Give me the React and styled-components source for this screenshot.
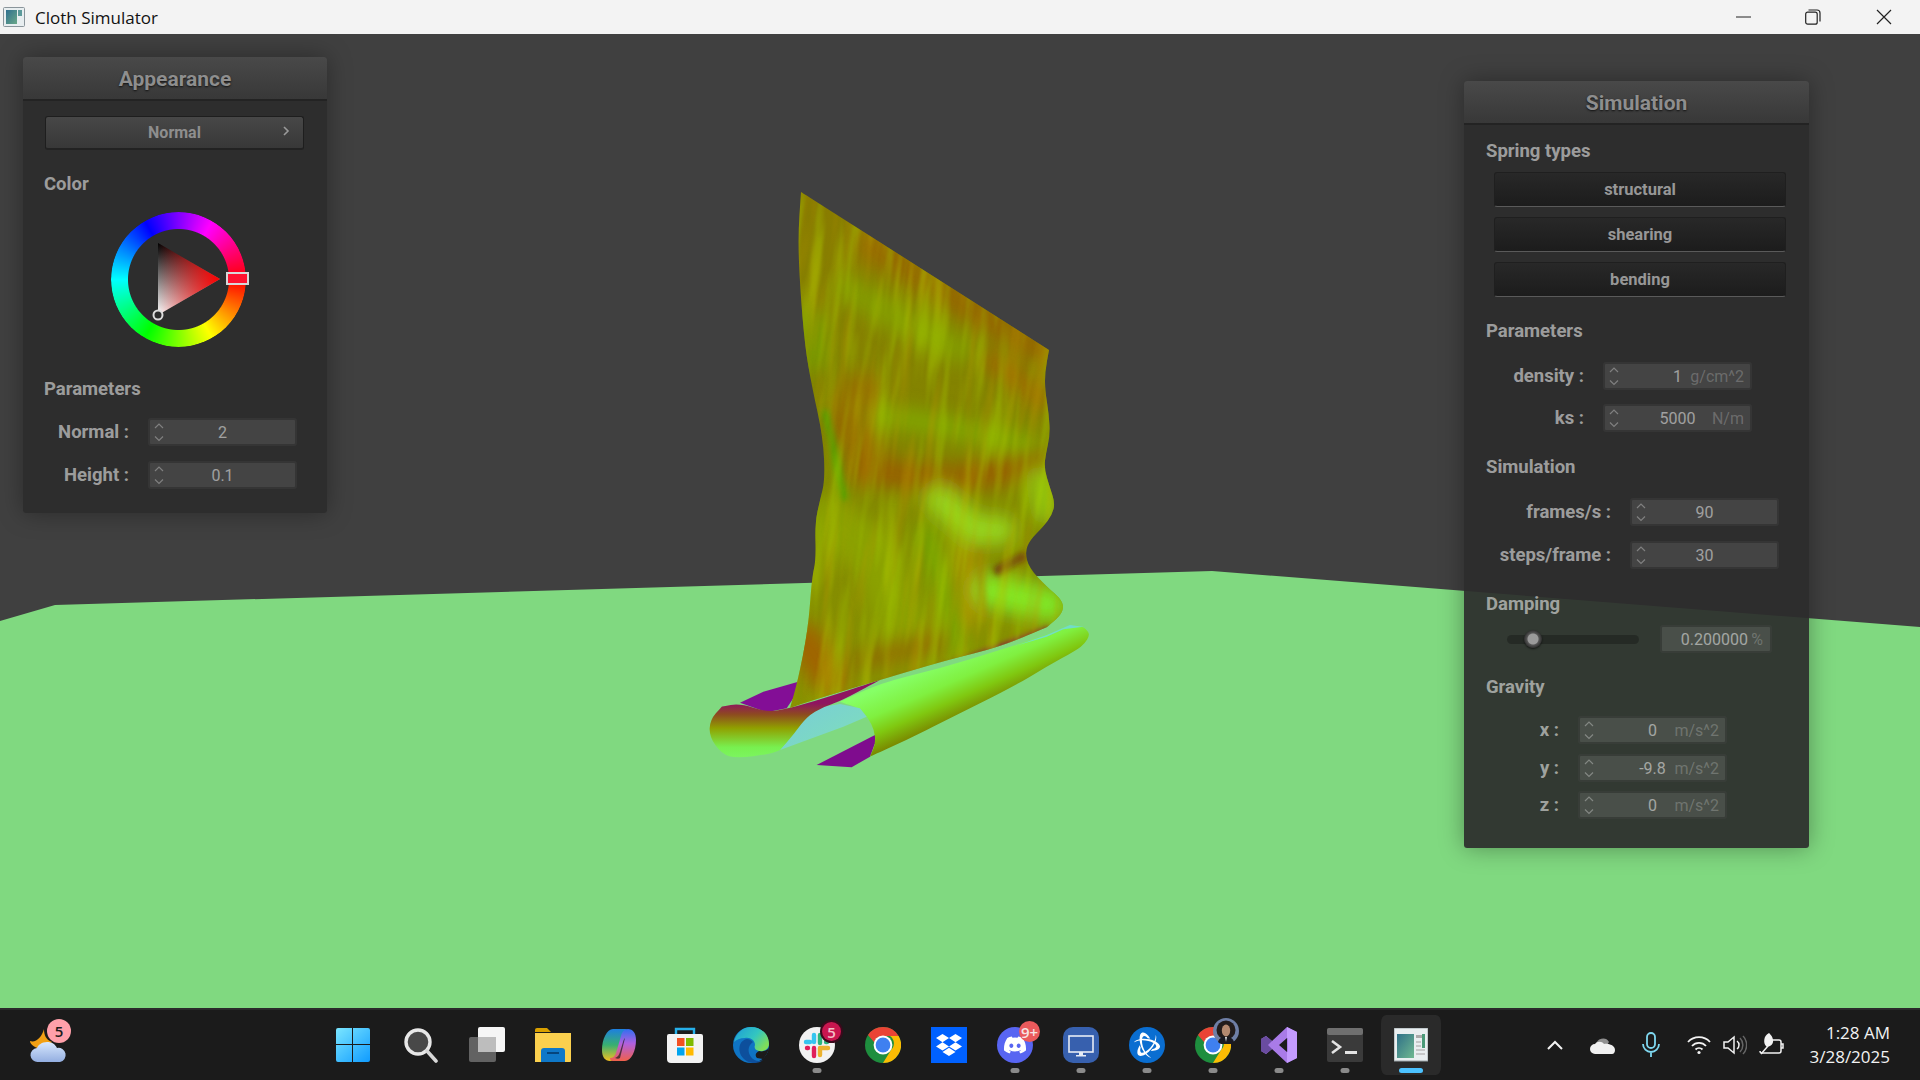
import React from "react";
import styled, { createGlobalStyle } from "styled-components";
import { SiBattledotnet } from "react-icons/si";
import { FaDiscord, FaDropbox } from "react-icons/fa";

const Global = createGlobalStyle`
  html, body { margin: 0; padding: 0; background: #404040; }
  * { box-sizing: border-box; }
`;

const Screen = styled.div`
  width: 1920px;
  height: 1080px;
  display: flex;
  flex-direction: column;
  overflow: hidden;
`;

const TitleBar = styled.div`
  height: 34px;
  background: #f3f3f3;
  display: flex;
  align-items: center;
  padding-left: 3px;
  font: 400 17px "Open Sans", sans-serif;
  color: #111;
`;
const AppName = styled.span`
  margin-left: 10px;
  flex: 1;
`;
const WinButton = styled.div`
  width: ${p => p.$w}px;
  height: 34px;
  display: flex;
  align-items: center;
  justify-content: center;
`;

const Viewport = styled.div`
  position: relative;
  height: 974px;
  background: #404040;
`;
const Scene = styled.svg`
  position: absolute;
  inset: 0;
  width: 1920px;
  height: 974px;
`;

const Panel = styled.div`
  position: absolute;
  left: ${p => p.$x}px;
  top: ${p => p.$y}px;
  width: ${p => p.$w}px;
  height: ${p => p.$h}px;
  background: rgba(43, 43, 43, 0.92);
  border-radius: 3px;
  box-shadow: 0 0 24px rgba(0, 0, 0, 0.35);
  font-family: Roboto, sans-serif;
`;
const PanelHead = styled.div`
  height: 44px;
  padding-top: 2px;
  background: linear-gradient(#494949, #383838);
  border-bottom: 2px solid #232323;
  border-radius: 3px 3px 0 0;
  display: flex;
  align-items: center;
  justify-content: center;
  font-size: 21px;
  font-weight: 700;
  color: #8e8e8e;
  text-shadow: 0 1px 2px #111;
`;
const Body = styled.div`
  padding-left: ${p => p.$pad}px;
`;
const SectionLabel = styled.div`
  height: 22px;
  line-height: 22px;
  margin-top: ${p => p.$mt}px;
  font-size: 18.5px;
  font-weight: 700;
  color: rgba(255, 255, 255, 0.55);
`;
const Dropdown = styled.div`
  position: relative;
  width: 259px;
  height: 34px;
  margin: 15px 0 0 22px;
  background: linear-gradient(#474747, #383838);
  border: 1px solid #1e1e1e;
  border-bottom: 2px solid #222;
  border-radius: 3px;
  display: flex;
  align-items: center;
  justify-content: center;
  font-size: 16px;
  font-weight: 700;
  color: #8e8e8e;
`;
const Caret = styled.svg`
  position: absolute;
  right: 12px;
  top: 8px;
`;
const WheelBox = styled.div`
  position: relative;
  width: 170px;
  height: 135px;
  margin: 17px 0 0 88px;
`;
const Ring = styled.div`
  position: absolute;
  left: 0;
  top: 0;
  width: 135px;
  height: 135px;
  border-radius: 50%;
  background: conic-gradient(from 90deg, #f00, #ff0, #0f0, #0ff, #00f, #f0f, #f00);
  -webkit-mask: radial-gradient(circle, transparent 50px, #000 51px);
  mask: radial-gradient(circle, transparent 50px, #000 51px);
`;
const Triangle = styled.svg`
  position: absolute;
  left: 0;
  top: 0;
  overflow: visible;
`;
const Row = styled.div`
  display: flex;
  align-items: center;
  gap: 19px;
  margin-top: ${p => p.$mt}px;
  height: 28px;
`;
const RowLabel = styled.div`
  width: ${p => p.$w}px;
  text-align: right;
  font-size: 18.5px;
  font-weight: 700;
  color: rgba(255, 255, 255, 0.55);
`;
const Field = styled.div`
  position: relative;
  width: ${p => p.$w || 149}px;
  height: 28px;
  background: rgba(255, 255, 255, 0.115);
  border: 2px solid rgba(0, 0, 0, 0.22);
  border-radius: 3px;
  display: flex;
  align-items: center;
  justify-content: center;
  font-size: 16px;
  color: rgba(255, 255, 255, 0.5);
`;
const Spin = styled.svg`
  position: absolute;
  left: 2px;
  top: 2px;
`;
const Unit = styled.span`
  position: absolute;
  right: 6px;
  color: rgba(255, 255, 255, 0.22);
`;
const ToggleList = styled.div`
  display: flex;
  flex-direction: column;
  gap: 10px;
  margin: 10px 0 0 8px;
`;
const Toggle = styled.div`
  width: 292px;
  height: 35px;
  background: linear-gradient(#282828, #1c1c1c);
  border: 1px solid #1f1f1f;
  border-bottom: 1px solid #5a5a5a;
  border-radius: 3px;
  display: flex;
  align-items: center;
  justify-content: center;
  font-size: 16.5px;
  font-weight: 700;
  color: #979797;
`;
const SliderRow = styled.div`
  display: flex;
  align-items: center;
  height: 28px;
  margin-top: 10px;
  padding-left: 21px;
`;
const Track = styled.div`
  position: relative;
  width: 132px;
  height: 9px;
  border-radius: 5px;
  background: rgba(0, 0, 0, 0.25);
`;
const Knob = styled.div`
  position: absolute;
  left: 17px;
  top: -5px;
  width: 18px;
  height: 18px;
  border-radius: 50%;
  background: radial-gradient(circle, #9a9a9a 0 5px, #555 6px, #2e2e2e 9px);
  box-shadow: 0 1px 2px rgba(0, 0, 0, 0.6);
`;
const ValueBox = styled(Field)`
  width: 112px;
  margin-left: 21px;
  justify-content: flex-end;
  padding-right: 22px;
`;
const Percent = styled(Unit)`
  right: 7px;
`;

const Taskbar = styled.div`
  height: 72px;
  background: #1b1b1b;
  border-top: 2px solid #2b2b2b;
  display: flex;
  align-items: center;
  font-family: "Open Sans", sans-serif;
`;
const WeatherSlot = styled.div`
  position: relative;
  width: 322px;
  padding-left: 30px;
  display: flex;
  align-items: center;
`;
const AppSlots = styled.div`
  display: flex;
`;
const Slot = styled.div`
  position: relative;
  width: 66px;
  height: 60px;
  display: flex;
  align-items: center;
  justify-content: center;
  border-radius: 8px;
  border: solid transparent;
  border-width: 0 3px;
  background: ${p => (p.$active ? "#2a2a2a" : "transparent")};
  background-clip: padding-box;
`;
const RunDot = styled.div`
  position: absolute;
  bottom: 2px;
  left: 50%;
  transform: translateX(-50%);
  width: ${p => (p.$active ? 24 : 9)}px;
  height: 5px;
  border-radius: 3px;
  background: ${p => (p.$active ? "#4cc2ff" : "#8a8a8a")};
`;
const Badge = styled.div`
  position: absolute;
  left: ${p => p.$x}px;
  top: ${p => p.$y}px;
  min-width: ${p => p.$size}px;
  height: ${p => p.$size}px;
  border-radius: 50%;
  background: ${p => p.$bg};
  color: ${p => p.$fg};
  font-size: 15px;
  font-weight: 600;
  display: flex;
  align-items: center;
  justify-content: center;
  box-shadow: ${p => p.$ring ? `0 0 0 2px ${p.$ring}` : "none"};
`;
const AvatarArt = styled.svg`
  position: absolute;
  left: 30px;
  top: 3px;
`;
const StartArt = styled.svg`
  margin-right: 4px;
`;
const Tray = styled.div`
  display: flex;
  align-items: center;
  margin-left: 87px;
`;
const TraySlot = styled.div`
  width: ${p => p.$w}px;
  display: flex;
  justify-content: center;
`;
const Clock = styled.div`
  flex: 1;
  text-align: right;
  padding-right: 30px;
  color: #f2f2f2;
  font-size: 17px;
  line-height: 24px;
  white-space: nowrap;
`;

// quadratic smoothing through midpoints, a repeated point stays a sharp corner
const smooth = pts => {
  const mid = (a, b) => [(a[0] + b[0]) / 2, (a[1] + b[1]) / 2];
  const start = mid(pts[pts.length - 1], pts[0]);
  let d = `M${start[0]} ${start[1]}`;
  pts.forEach((p, i) => {
    const m = mid(p, pts[(i + 1) % pts.length]);
    d += `Q${p[0]} ${p[1]} ${m[0]} ${m[1]}`;
  });
  return d + "Z";
};

const clothOutline = smooth([
  [801, 192], [801, 192], [801, 192], [925, 271], [1049, 350], [1049, 350], [1049, 350],
  [1045, 372], [1045, 390], [1049, 415], [1050, 435], [1046, 453], [1044, 468], [1050, 488],
  [1055, 503], [1052, 515], [1043, 527], [1030, 540], [1025, 552], [1029, 568], [1047, 587],
  [1060, 598], [1064, 607], [1060, 616], [1047, 627], [1047, 627], [1000, 647], [947, 660],
  [880, 680], [813, 700], [790, 708], [790, 708], [790, 708], [798, 680], [808, 630], [812, 577],
  [816, 560], [815, 523], [820, 500], [825, 480], [823, 437], [812, 387], [805, 347], [800, 287],
  [798, 237],
]);
const tubeOutline = smooth([
  [1228, 467], [1225, 455], [1210, 440], [1170, 435], [1100, 465], [960, 510], [780, 565], [600, 610],
  [480, 665], [480, 665], [540, 685], [565, 715], [583, 750], [587, 790], [570, 830], [570, 830], [570, 830],
  [680, 780], [800, 720], [1000, 620], [1100, 560], [1190, 510], [1215, 490],
]);
const frontOutline = smooth([
  [125, 680], [125, 680], [180, 670], [260, 697], [330, 685], [430, 655], [600, 600], [600, 600], [600, 600],
  [480, 665], [430, 680], [380, 710], [340, 765], [300, 810], [300, 810], [270, 822], [170, 835],
  [125, 822], [88, 770], [90, 720],
]);

const clothBands = [
  { d: "M870 245L1040 350", c: "#9a6000", w: 28, o: 0.75 },
  { d: "M850 290L900 320L960 350", c: "#82a000", w: 30, o: 0.8 },
  { d: "M815 320L815 360", c: "#76a000", w: 24, o: 0.9 },
  { d: "M860 390L845 430L870 450", c: "#9a6400", w: 36, o: 0.8 },
  { d: "M1040 400L1020 380L990 360", c: "#a06000", w: 18, o: 0.85 },
  { d: "M880 415L940 425L1030 445", c: "#82a800", w: 22, o: 0.9 },
  { d: "M860 470L950 480L1040 465", c: "#9a5c00", w: 28, o: 0.85 },
  { d: "M1040 480L1045 510", c: "#92c410", w: 28, o: 1 },
  { d: "M830 520L880 560L900 620", c: "#8ca400", w: 50, o: 0.9 },
  { d: "M940 500L975 530L1000 530", c: "#96d41e", w: 30, o: 1 },
  { d: "M965 550L972 620", c: "#b09400", w: 16, o: 1 },
  { d: "M925 530L945 600L960 650", c: "#6fae00", w: 14, o: 1 },
  { d: "M990 590L1050 605", c: "#80e828", w: 34, o: 1 },
  { d: "M805 640L830 680", c: "#a06400", w: 34, o: 1 },
  { d: "M860 660L940 640", c: "#8e6e00", w: 20, o: 1 },
];

const Chevrons = () => (
  <Spin width="14" height="22" viewBox="0 0 14 22" fill="none" stroke="rgba(255,255,255,0.32)" strokeWidth="1.2">
    <path d="M3 6l4-4 4 4M3 14.500l4 4 4-4" />
  </Spin>
);

const NumberField = ({ value, unit, w }) => (
  <Field $w={w}>
    <Chevrons />
    {value}
    {unit && <Unit>{unit}</Unit>}
  </Field>
);

const ClothScene = () => (
  <Scene viewBox="0 34 1920 974">
    <defs>
      <clipPath id="clothClip">
        <path d={clothOutline} />
      </clipPath>
      <filter id="soft" x="-30%" y="-30%" width="160%" height="160%">
        <feGaussianBlur stdDeviation="9" />
      </filter>
      <filter id="softer" x="-30%" y="-30%" width="160%" height="160%">
        <feGaussianBlur stdDeviation="3" />
      </filter>
      <filter id="streakG" x="0" y="0" width="100%" height="100%">
        <feTurbulence type="fractalNoise" baseFrequency="0.085 0.008" numOctaves="3" seed="7" />
        <feColorMatrix values="0 0 0 0 0.42  0 0 0 0 0.66  0 0 0 0 0  3.2 0 0 0 -1.45" />
        <feGaussianBlur stdDeviation="1.2" />
      </filter>
      <filter id="streakB" x="0" y="0" width="100%" height="100%">
        <feTurbulence type="fractalNoise" baseFrequency="0.08 0.007" numOctaves="3" seed="21" />
        <feColorMatrix values="0 0 0 0 0.5  0 0 0 0 0.32  0 0 0 0 0  3 0 0 0 -1.4" />
        <feGaussianBlur stdDeviation="1.2" />
      </filter>
      <linearGradient id="clothBase" x1="0" y1="0" x2="0" y2="1">
        <stop offset="0" stopColor="#8a7b00" />
        <stop offset="0.5" stopColor="#828600" />
        <stop offset="1" stopColor="#889400" />
      </linearGradient>
      <linearGradient id="tubeMain" gradientUnits="userSpaceOnUse" x1="770" y1="550" x2="840" y2="710">
        <stop offset="0" stopColor="#86ff66" />
        <stop offset="0.4" stopColor="#80f040" />
        <stop offset="0.7" stopColor="#80c810" />
        <stop offset="1" stopColor="#7a8a00" />
      </linearGradient>
      <linearGradient id="tubeFront" gradientUnits="userSpaceOnUse" x1="0" y1="670" x2="0" y2="835">
        <stop offset="0" stopColor="#8f1460" />
        <stop offset="0.2" stopColor="#8d4a20" />
        <stop offset="0.45" stopColor="#90a000" />
        <stop offset="0.8" stopColor="#78f050" />
        <stop offset="1" stopColor="#7cf560" />
      </linearGradient>
      <linearGradient id="hole" x1="0" y1="0" x2="1" y2="1">
        <stop offset="0" stopColor="#78ccd8" />
        <stop offset="1" stopColor="#7fe0b8" />
      </linearGradient>
    </defs>

    <path d="M0 621L55 605L1212 571L1920 627V1008H0Z" fill="#80d980" />

    <g transform="translate(680 480) scale(0.3333)">
      <path d="M355 605L250 635L180 668L260 697L320 685L350 640Z" fill="#830e96" />
      <path d="M585 765L410 855L515 862L570 830L585 790Z" fill="#7f0c8e" />
      <path d={tubeOutline} fill="url(#tubeMain)" />
      <path d="M300 810L380 710L430 680L480 672L540 685L560 710L490 740Z" fill="url(#hole)" />
      <path d={frontOutline} fill="url(#tubeFront)" />
      <path d="M1170 435L1210 440L1150 448L1100 470L1000 500L1100 465Z" fill="#72dcc8" />
    </g>

    <g clipPath="url(#clothClip)">
      <rect x="780" y="180" width="300" height="540" fill="url(#clothBase)" />
      <g filter="url(#soft)" fill="none" strokeLinecap="round" strokeLinejoin="round">
        {clothBands.map(b => (
          <path key={b.d} d={b.d} stroke={b.c} strokeWidth={b.w} opacity={b.o} />
        ))}
      </g>
      <g filter="url(#softer)" fill="none">
        <path d="M825 410L840 480L845 500" stroke="#4ea800" strokeWidth="6" />
        <path d="M995 572L1025 555" stroke="#70380c" strokeWidth="9" />
        <path d="M980 550L983 620" stroke="#a08a00" strokeWidth="5" />
        <path d="M815 708L880 688L950 667L1050 630" stroke="#8a1050" strokeWidth="6" />
      </g>
      <g transform="rotate(7 930 450)">
        <rect x="740" y="150" width="380" height="600" filter="url(#streakB)" opacity="0.38" />
        <rect x="740" y="150" width="380" height="600" filter="url(#streakG)" opacity="0.38" />
      </g>
    </g>
  </Scene>
);

const WinIcon = () => (
  <svg width="22" height="22" viewBox="0 0 22 22">
    <rect x="0.5" y="1.5" width="21" height="19" rx="1" fill="#e8eef0" stroke="#8a959b" />
    <defs>
      <linearGradient id="winFill" x1="0" y1="0" x2="1" y2="1">
        <stop offset="0" stopColor="#2f6f8f" />
        <stop offset="1" stopColor="#6aa888" />
      </linearGradient>
    </defs>
    <rect x="3" y="4" width="11" height="14" fill="url(#winFill)" />
    <rect x="15" y="4" width="4" height="6" fill="#5c9a9a" />
  </svg>
);

const StartIcon = () => (
  <StartArt width="36" height="36" viewBox="0 0 36 36">
    <defs>
      <linearGradient id="st" gradientUnits="userSpaceOnUse" x1="2" y1="0" x2="34" y2="36">
        <stop offset="0" stopColor="#7be6ff" />
        <stop offset="1" stopColor="#0f9bff" />
      </linearGradient>
    </defs>
    <path d="M1 3a2 2 0 0 1 2-2h14v16H1zM18 1h15a2 2 0 0 1 2 2v14H18zM1 18h16v17H3a2 2 0 0 1-2-2zM18 18h17v15a2 2 0 0 1-2 2H18z" fill="url(#st)" />
  </StartArt>
);
const SearchIcon = () => (
  <svg width="36" height="36" viewBox="0 0 36 36">
    <circle cx="15" cy="15" r="12" fill="#484848" stroke="#e8e8e8" strokeWidth="3.4" />
    <path d="M24 24l9 10" stroke="#d8d8d8" strokeWidth="3.6" strokeLinecap="round" />
  </svg>
);
const TaskViewIcon = () => (
  <svg width="36" height="36" viewBox="0 0 36 36">
    <rect x="9" y="0" width="27" height="25" rx="2" fill="#f6f6f6" />
    <rect x="0" y="10" width="27" height="25" rx="2" fill="#626262" />
    <rect x="9" y="10" width="18" height="15" fill="#bdbdbd" />
  </svg>
);
const ExplorerIcon = () => (
  <svg width="36" height="36" viewBox="0 0 36 36">
    <path d="M0 3a2 2 0 0 1 2-2h10l4 4H0z" fill="#d9a000" />
    <path d="M0 6h36v28a1 1 0 0 1-1 1H0z" fill="#fbd04e" />
    <path d="M6 24a3 3 0 0 1 3-3h18a3 3 0 0 1 3 3v11H6z" fill="#0f78c8" />
    <rect x="12" y="25" width="12" height="2" fill="#05457d" />
  </svg>
);
const CopilotIcon = () => (
  <svg width="36" height="36" viewBox="0 0 36 36">
    <defs>
      <linearGradient id="cpA" x1="0" y1="0" x2="0" y2="1">
        <stop offset="0" stopColor="#1d7fe0" />
        <stop offset="0.5" stopColor="#38b070" />
        <stop offset="1" stopColor="#f5c020" />
      </linearGradient>
      <linearGradient id="cpB" x1="0" y1="0" x2="0" y2="1">
        <stop offset="0" stopColor="#2f6ff0" />
        <stop offset="0.45" stopColor="#b060e0" />
        <stop offset="1" stopColor="#f0604a" />
      </linearGradient>
    </defs>
    <path d="M12 2h12c2 0 3 1 3 3-3 0-5 2-6 5l-5 17c-1 4-3 7-7 7-5 0-8-4-8-11C1 12 6 2 12 2z" fill="url(#cpA)" />
    <path d="M24 34H12c-2 0-3-1-3-3 3 0 5-2 6-5l5-17c1-4 3-7 7-7 5 0 8 4 8 11 0 11-5 21-11 21z" fill="url(#cpB)" />
    <path d="M14 31c3-1 4-3 5-6l3-10c.5-2 1-3 2-4l-5 20c-1 1-3 1-5 0z" fill="#1b1b1b" fillOpacity="0.7" />
  </svg>
);
const StoreIcon = () => (
  <svg width="36" height="36" viewBox="0 0 36 36">
    <path d="M9 8V2h18v6" fill="none" stroke="#26b0ea" strokeWidth="2.4" />
    <path d="M0 9a2 2 0 0 1 2-2h32a2 2 0 0 1 2 2v23a4 4 0 0 1-4 4H4a4 4 0 0 1-4-4z" fill="#f3f3f3" />
    <rect x="10" y="11" width="7.5" height="8" fill="#f25022" />
    <rect x="19" y="11" width="7.5" height="8" fill="#7fba00" />
    <rect x="10" y="20.5" width="7.5" height="8" fill="#00a4ef" />
    <rect x="19" y="20.5" width="7.5" height="8" fill="#ffb900" />
  </svg>
);
const EdgeIcon = () => (
  <svg width="36" height="36" viewBox="0 0 36 36">
    <defs>
      <linearGradient id="edA" x1="0" y1="0" x2="1" y2="0.6">
        <stop offset="0" stopColor="#1c9bd8" />
        <stop offset="0.6" stopColor="#33c6c0" />
        <stop offset="1" stopColor="#7ede5a" />
      </linearGradient>
    </defs>
    <circle cx="18" cy="18" r="18" fill="#0f74c4" />
    <path d="M1 15C3 6 10 0 18 0c10 0 18 7 18 17 0 5-5 8-10 7-4-1-5-3-4-6 0-5-5-8-10-7-5 0-9 2-11 4z" fill="url(#edA)" />
    <path d="M14 12c-6 1-9 7-7 14 2 6 8 10 14 10 4 0 7-1 9-3-4 2-9 1-12-3-3-4-4-11 2-15-2-2-4-3-6-3z" fill="#0d4f9c" />
    <path d="M26 24c3 1 7 0 10-3-1 4-3 8-6 11l-6-1c-2-2-2-5 2-7z" fill="#1b1b1b" />
  </svg>
);
const SlackIcon = () => (
  <svg width="36" height="36" viewBox="0 0 36 36">
    <circle cx="18" cy="18" r="18" fill="#f2f2f2" />
    <g strokeWidth="4.4" strokeLinecap="round" fill="none">
      <path d="M15 8v7M7 15h4" stroke="#36c5f0" />
      <path d="M21 8v8M28 15h-1" stroke="#2eb67d" />
      <path d="M21 28v-7M29 21h-8" stroke="#ecb22e" />
      <path d="M15 29v-8M8 21h1" stroke="#e01e5a" />
    </g>
  </svg>
);
const ChromeIcon = () => (
  <svg width="36" height="36" viewBox="0 0 36 36">
    <circle cx="18" cy="18" r="18" fill="#1e8e3e" />
    <path d="M18 0a18 18 0 0 1 15.600 9H18a9 9 0 0 0-8.600 6.400L3 8A18 18 0 0 1 18 0z" fill="#ea4335" />
    <path d="M33.600 9A18 18 0 0 1 18 36l8-13a9 9 0 0 0-1-14z" fill="#fbbc04" />
    <circle cx="18" cy="18" r="9.400" fill="#fff" />
    <circle cx="18" cy="18" r="7.400" fill="#3f80f0" />
  </svg>
);
const Avatar = () => (
  <AvatarArt width="26" height="26" viewBox="0 0 26 26">
    <circle cx="13" cy="13" r="13" fill="#6f7fa6" />
    <circle cx="13" cy="12" r="9.500" fill="#221c1c" />
    <ellipse cx="13" cy="12.500" rx="4.200" ry="6" fill="#b58a70" />
    <path d="M5 24c1-4 4-5 8-5s7 1 8 5a12 12 0 0 1-16 0z" fill="#1a1a22" />
    <path d="M12 19h2l-1 5z" fill="#ddd" />
  </AvatarArt>
);
const RemoteIcon = () => (
  <svg width="36" height="36" viewBox="0 0 36 36">
    <rect width="36" height="36" rx="10" fill="#3760ae" />
    <rect x="6" y="9" width="24" height="16" fill="#3760ae" stroke="#e6ecf5" strokeWidth="1.6" />
    <path d="M16 25h4v3h3v1.600H13V28h3z" fill="#e6ecf5" />
  </svg>
);
const BrandCircle = styled.div`
  width: 36px;
  height: 36px;
  border-radius: ${p => p.$radius};
  background: ${p => p.$bg};
  display: flex;
  align-items: center;
  justify-content: center;
  color: #fff;
  font-size: ${p => p.$icon}px;
`;
const VsIcon = () => (
  <svg width="36" height="36" viewBox="0 0 36 36">
    <path d="M26 0l10 5v26l-10 5-15-14-6 5-5-3V12l5-3 6 5zM26 11l-8 7 8 7z" fill="#a97be8" />
    <path d="M26 0l10 5v26l-10 5V25l1 0V11l-1 0z" fill="#c49bff" />
    <path d="M0 12l5-3 6 5-4 4 4 4-6 5-5-3z" fill="#6a4ca0" />
  </svg>
);
const TerminalIcon = () => (
  <svg width="36" height="34" viewBox="0 0 36 34">
    <rect width="36" height="34" rx="2" fill="#3a3a3a" />
    <rect width="36" height="7" rx="2" fill="#6f6f6f" />
    <path d="M5 13l8 6-8 6" fill="none" stroke="#e4e4e4" strokeWidth="2.600" />
    <rect x="18" y="23" width="12" height="3" fill="#e4e4e4" />
  </svg>
);
const SimIcon = () => (
  <svg width="34" height="34" viewBox="0 0 34 34">
    <defs>
      <linearGradient id="simG" x1="0" y1="0" x2="1" y2="1">
        <stop offset="0" stopColor="#2f7088" />
        <stop offset="1" stopColor="#6fb890" />
      </linearGradient>
    </defs>
    <rect width="34" height="33" fill="#e9eef0" stroke="#9aa4a8" />
    <rect x="3" y="6" width="17" height="24" fill="url(#simG)" />
    <rect x="22" y="7" width="9" height="3" fill="#aaa" />
    <rect x="28" y="6" width="3" height="14" fill="#4a9a78" />
    <path d="M22 14h5M22 18h5M22 22h9M22 26h9" stroke="#bbb" strokeWidth="1.500" />
  </svg>
);
const WeatherIcon = () => (
  <svg width="38" height="36" viewBox="0 0 38 36">
    <defs>
      <linearGradient id="cloudG" x1="0" y1="0" x2="0" y2="1">
        <stop offset="0" stopColor="#d8e8ff" />
        <stop offset="1" stopColor="#93aee0" />
      </linearGradient>
    </defs>
    <path d="M14 2c0 6 2 11 8 13l-10 8C6 21 0 18 0 14c6 2 12-4 14-12z" fill="#f2a014" />
    <path d="M8 35a7 7 0 0 1-1-14c1-3 5-6 10-6 5 0 8 2 10 6a7 7 0 0 1 3 14z" fill="url(#cloudG)" />
  </svg>
);

const slots = [
  { key: "start", icon: <StartIcon /> },
  { key: "search", icon: <SearchIcon /> },
  { key: "tasks", icon: <TaskViewIcon /> },
  { key: "explorer", icon: <ExplorerIcon /> },
  { key: "copilot", icon: <CopilotIcon /> },
  { key: "store", icon: <StoreIcon /> },
  { key: "edge", icon: <EdgeIcon /> },
  { key: "slack", icon: <SlackIcon />, run: true, badge: <Badge $x={35} $y={7} $size={19} $bg="#c9164f" $fg="#f4c0c8" $ring="#3a0a1c">5</Badge> },
  { key: "chrome", icon: <ChromeIcon /> },
  { key: "dropbox", icon: <BrandCircle $radius="0" $bg="#0061ff" $icon={26}><FaDropbox /></BrandCircle> },
  { key: "discord", icon: <BrandCircle $radius="50%" $bg="#5865f2" $icon={24}><FaDiscord /></BrandCircle>, run: true, badge: <Badge $x={34} $y={6} $size={21} $bg="#ea5a5c" $fg="#f6e4e4">9+</Badge> },
  { key: "remote", icon: <RemoteIcon />, run: true },
  { key: "battle", icon: <BrandCircle $radius="50%" $bg="#0a6ed1" $icon={26}><SiBattledotnet /></BrandCircle>, run: true },
  { key: "chrome2", icon: <ChromeIcon />, run: true, badge: <Avatar /> },
  { key: "vs", icon: <VsIcon />, run: true },
  { key: "terminal", icon: <TerminalIcon />, run: true },
  { key: "sim", icon: <SimIcon />, active: true },
];

export default function App() {
  return (
    <Screen>
      <Global />
      <TitleBar>
        <WinIcon />
        <AppName>Cloth Simulator</AppName>
        <WinButton $w={69}>
          <svg width="16" height="16" viewBox="0 0 16 16"><path d="M0 8h15" stroke="#222" strokeWidth="1" /></svg>
        </WinButton>
        <WinButton $w={69}>
          <svg width="16" height="16" viewBox="0 0 16 16" fill="none" stroke="#222" strokeWidth="1.200">
            <rect x="0.700" y="3.200" width="11.500" height="12" rx="2" />
            <path d="M3.500 1h8.500a3 3 0 0 1 3 3v8.500" />
          </svg>
        </WinButton>
        <WinButton $w={73}>
          <svg width="16" height="16" viewBox="0 0 16 16"><path d="M1 1l14 14M15 1L1 15" stroke="#222" strokeWidth="1.200" /></svg>
        </WinButton>
      </TitleBar>

      <Viewport>
        <ClothScene />

        <Panel $x={23} $y={23} $w={304} $h={456}>
          <PanelHead>Appearance</PanelHead>
          <Dropdown>
            Normal
            <Caret width="10" height="12" viewBox="0 0 10 12" fill="none" stroke="#9a9a9a" strokeWidth="1.600">
              <path d="M3 2l4 4-4 4" />
            </Caret>
          </Dropdown>
          <Body $pad={21}>
            <SectionLabel $mt={23}>Color</SectionLabel>
          </Body>
          <WheelBox>
            <Ring />
            <Triangle width="170" height="135" viewBox="0 0 170 135">
              <defs>
                <linearGradient id="triBase" x1="0" y1="0" x2="0" y2="1">
                  <stop offset="0" stopColor="#000" />
                  <stop offset="1" stopColor="#fff" />
                </linearGradient>
                <linearGradient id="triHue" gradientUnits="userSpaceOnUse" x1="47" y1="67" x2="109" y2="67">
                  <stop offset="0" stopColor="#f00" stopOpacity="0" />
                  <stop offset="1" stopColor="#f00" />
                </linearGradient>
              </defs>
              <path d="M47 31L109 67L47 103Z" fill="url(#triBase)" />
              <path d="M47 31L109 67L47 103Z" fill="url(#triHue)" />
              <circle cx="47" cy="103" r="4.500" fill="#2c2c2c" stroke="#ddd" strokeWidth="2" />
              <rect x="116" y="61" width="21" height="11" fill="#ff1230" stroke="#d8d8d8" strokeWidth="2" />
            </Triangle>
          </WheelBox>
          <Body $pad={21}>
            <SectionLabel $mt={31}>Parameters</SectionLabel>
          </Body>
          <Row $mt={18}>
            <RowLabel $w={106}>Normal :</RowLabel>
            <NumberField value="2" />
          </Row>
          <Row $mt={15}>
            <RowLabel $w={106}>Height :</RowLabel>
            <NumberField value="0.1" />
          </Row>
        </Panel>

        <Panel $x={1464} $y={47} $w={345} $h={767}>
          <PanelHead>Simulation</PanelHead>
          <Body $pad={22}>
            <SectionLabel $mt={15}>Spring types</SectionLabel>
            <ToggleList>
              <Toggle>structural</Toggle>
              <Toggle>shearing</Toggle>
              <Toggle>bending</Toggle>
            </ToggleList>
            <SectionLabel $mt={23}>Parameters</SectionLabel>
          </Body>
          <Row $mt={20}>
            <RowLabel $w={120}>density :</RowLabel>
            <NumberField value="1" unit="g/cm^2" />
          </Row>
          <Row $mt={14}>
            <RowLabel $w={120}>ks :</RowLabel>
            <NumberField value="5000" unit="N/m" />
          </Row>
          <Body $pad={22}>
            <SectionLabel $mt={24}>Simulation</SectionLabel>
          </Body>
          <Row $mt={20}>
            <RowLabel $w={147}>frames/s :</RowLabel>
            <NumberField value="90" />
          </Row>
          <Row $mt={15}>
            <RowLabel $w={147}>steps/frame :</RowLabel>
            <NumberField value="30" />
          </Row>
          <Body $pad={22}>
            <SectionLabel $mt={24}>Damping</SectionLabel>
            <SliderRow>
              <Track><Knob /></Track>
              <ValueBox>
                0.200000
                <Percent>%</Percent>
              </ValueBox>
            </SliderRow>
            <SectionLabel $mt={23}>Gravity</SectionLabel>
          </Body>
          <Row $mt={18}>
            <RowLabel $w={95}>x :</RowLabel>
            <NumberField value="0" unit="m/s^2" />
          </Row>
          <Row $mt={10}>
            <RowLabel $w={95}>y :</RowLabel>
            <NumberField value="-9.8" unit="m/s^2" />
          </Row>
          <Row $mt={9}>
            <RowLabel $w={95}>z :</RowLabel>
            <NumberField value="0" unit="m/s^2" />
          </Row>
        </Panel>
      </Viewport>

      <Taskbar>
        <WeatherSlot>
          <WeatherIcon />
          <Badge $x={47} $y={-8} $size={24} $bg="#ffa0aa" $fg="#1b1b1b">5</Badge>
        </WeatherSlot>
        <AppSlots>
          {slots.map(s => (
            <Slot key={s.key} $active={s.active}>
              {s.icon}
              {s.badge}
              {(s.run || s.active) && <RunDot $active={s.active} />}
            </Slot>
          ))}
        </AppSlots>
        <Tray>
          <TraySlot $w={48}>
            <svg width="18" height="12" viewBox="0 0 18 12" fill="none" stroke="#f2f2f2" strokeWidth="2"><path d="M2 10l7-7 7 7" /></svg>
          </TraySlot>
          <TraySlot $w={48}>
            <svg width="26" height="18" viewBox="0 0 26 18">
              <path d="M6 9a7 7 0 0 1 13-3l-3 4z" fill="#8f8f8f" />
              <path d="M5 18a5 5 0 0 1 0-10c2-3 7-3 9 0 4-1 11 1 11 6 0 2-1 4-3 4z" fill="#f0f0f0" />
            </svg>
          </TraySlot>
          <TraySlot $w={48}>
            <svg width="20" height="26" viewBox="0 0 20 26" fill="none" stroke="#7fd8f0" strokeWidth="1.800">
              <rect x="6" y="1" width="8" height="15" rx="4" />
              <path d="M2 12a8 8 0 0 0 16 0M10 20v5" />
            </svg>
          </TraySlot>
          <TraySlot $w={48}>
            <svg width="24" height="20" viewBox="0 0 24 20" fill="none" stroke="#f2f2f2" strokeWidth="1.800">
              <path d="M1 7a15 15 0 0 1 22 0M5 11a9.500 9.500 0 0 1 14 0M8.500 14.500a5 5 0 0 1 7 0" />
              <circle cx="12" cy="17.500" r="1.600" fill="#f2f2f2" stroke="none" />
            </svg>
          </TraySlot>
          <TraySlot $w={24}>
            <svg width="24" height="22" viewBox="0 0 24 22" fill="none" stroke="#f2f2f2" strokeWidth="1.500">
              <path d="M1 8h4l6-5v16l-6-5H1z" />
              <path d="M14 7a5 5 0 0 1 0 8" />
              <path d="M17 4a10 10 0 0 1 0 14M20 2a13 13 0 0 1 0 18" stroke="#666" />
            </svg>
          </TraySlot>
          <TraySlot $w={48}>
            <svg width="25" height="24" viewBox="0 0 25 24" fill="none" stroke="#f2f2f2" strokeWidth="1.500">
              <path d="M10 1c3 3 4 6 3 9-1 2-3 3-5 3-3-3-3-9 2-12z" fill="#f2f2f2" />
              <path d="M13 7h7a2 2 0 0 1 2 2v9a2 2 0 0 1-2 2H3a2 2 0 0 1-2-2 M22 11h2v4h-2" />
              <path d="M2 21l7-8" />
            </svg>
          </TraySlot>
        </Tray>
        <Clock>
          1:28 AM
          <br />
          3/28/2025
        </Clock>
      </Taskbar>
    </Screen>
  );
}
